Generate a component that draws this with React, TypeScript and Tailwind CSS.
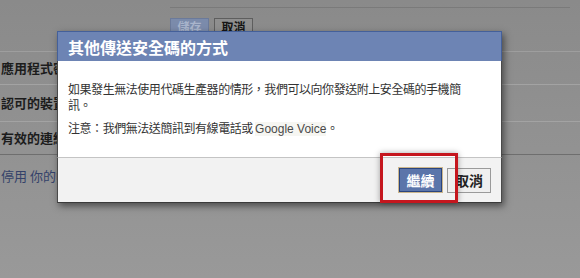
import React from 'react';

const CJK = '"Noto Sans CJK TC", "Noto Sans CJK SC", sans-serif';

function BackgroundPage() {
  return (
    <div className="h-full bg-gradient-to-b from-[#8a8a8a] to-[#999999]" style={{ fontFamily: CJK }}>
      {/* top area: rule + save/cancel */}
      <div className="h-[52px] border-b border-[#9e9e9e]">
        <div className="pt-[7px]">
          <div className="ml-[170px] w-[400px] h-px bg-[#7a7a7a]" />
        </div>
        <div className="ml-[170px] mt-[10px] flex gap-[5px]">
          <div className="w-[39px] h-[18px] bg-[#7b8bab] border border-[#6b7a9a] text-[12px] font-bold text-[#a9b4cb] flex items-center justify-center leading-none">
            儲存
          </div>
          <div className="w-[39px] h-[18px] bg-[#8f8f8f] border border-[#5e5e5e] text-[12px] font-bold text-[#151515] flex items-center justify-center leading-none">
            取消
          </div>
        </div>
      </div>
      <div className="h-[33px] border-b border-[#a3a3a3] flex items-center pl-[1px] text-[13px] font-bold text-[#1c1c1c]">
        <span className="w-[56px] overflow-hidden whitespace-nowrap">應用程式密碼</span>
      </div>
      <div className="h-[37px] border-b border-[#a3a3a3] flex items-center pl-[1px] text-[13px] font-bold text-[#1c1c1c]">
        <span className="w-[56px] overflow-hidden whitespace-nowrap">認可的裝置</span>
      </div>
      <div className="h-[33px] border-b border-[#6e6e6e] flex items-center pl-[1px] text-[13px] font-bold text-[#1c1c1c]">
        <span className="w-[56px] overflow-hidden whitespace-nowrap">有效的連線階段</span>
      </div>
      <div className="pt-[13px] pl-[1px] text-[13px] leading-[16px] text-[#34426a]">
        <div className="w-[56px] overflow-hidden whitespace-nowrap">停用 你的帳號</div>
      </div>
    </div>
  );
}

function Dialog() {
  return (
    <div
      className="absolute left-[57px] top-[31px] w-[445px] shadow-[2px_3px_7px_rgba(0,0,0,0.5)]"
      style={{ fontFamily: CJK }}
    >
      <div className="h-[30px] bg-[#6d84b4] border border-b-0 border-[#44609a] flex items-center pl-[10px] text-[16px] font-bold text-white leading-none">
        其他傳送安全碼的方式
      </div>
      <div className="bg-white border-x border-[#4a4a4a] px-[10px] pt-[20px] pb-[20px] text-[12px] leading-[16px] text-[#333] tracking-[-0.45px]">
        <p>
          如果發生無法使用代碼生產器的情形，我們可以向你發送附上安全碼的手機簡
          <br />
          訊。
        </p>
        <p className="mt-[7px]">
          注意：我們無法送簡訊到有線電話或{' '}
          <span
            className="bg-[#f6f6f2] text-[#4a4a4a] tracking-normal"
            style={{ fontFamily: '"Liberation Sans", Arial, sans-serif' }}
          >
            Google Voice
          </span>
          。
        </p>
      </div>
      <div className="box-border h-[46px] bg-[#f2f2f2] border-t border-t-[#c4c4c4] border-x border-b border-x-[#4a4a4a] border-b-[#3a3a3a] flex items-center justify-end gap-[5px] pr-[10px]">
        <button className="w-[43px] h-[24px] bg-[#5b75aa] border border-[#29447e] ring-1 ring-[#cbb68c] text-white text-[14px] font-bold leading-none flex items-center justify-center">
          繼續
        </button>
        <button className="w-[44px] h-[25px] bg-[#efefef] border border-[#9a9a9a] text-[#222] text-[14px] font-bold leading-none flex items-center justify-center">
          取消
        </button>
      </div>
    </div>
  );
}

export default function App() {
  return (
    <div className="relative w-[580px] h-[278px] overflow-hidden">
      <BackgroundPage />
      <Dialog />
      {/* red highlight annotation */}
      <div className="absolute left-[380px] top-[153px] w-[78px] h-[50px] border-[3px] border-[#c5161e] shadow-[0_0_6px_rgba(0,0,0,0.35)]" />
    </div>
  );
}
